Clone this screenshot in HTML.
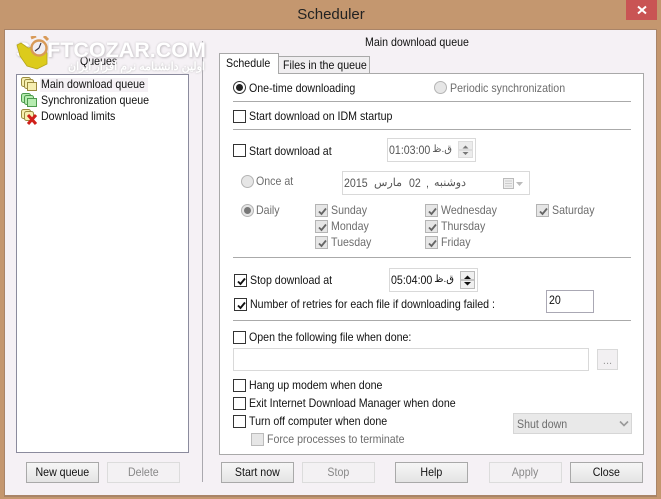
<!DOCTYPE html>
<html><head><meta charset="utf-8">
<style>
html,body{margin:0;padding:0}
body{width:661px;height:499px;overflow:hidden;position:relative;background:#c4976f;font-family:"Liberation Sans","Noto Sans CJK SC",sans-serif;font-size:12px;color:#111}
.a,.t,.cb,.rd,.btn,.sep,.n{position:absolute;box-sizing:border-box}
.t{white-space:nowrap;line-height:14px;height:14px;transform:scaleX(.885);transform-origin:0 0}
.n{white-space:nowrap;line-height:14px;height:14px}
.d{color:#6d6d6d}
.cb{width:13px;height:13px;border:1px solid #333;background:#fff}
.cb.g{border-color:#b4b4b4;background:#e6e6e6}
.cb svg{position:absolute;left:1px;top:1px}
.rd{width:13px;height:13px;border-radius:50%;border:1px solid #333;background:#fff}
.rd.g{border-color:#b4b4b4;background:#e6e6e6}
.rd i{position:absolute;left:2px;top:2px;width:7px;height:7px;border-radius:50%;background:#222}
.rd.g i{background:#777}
.btn{height:21px;width:73px;top:462px;border:1px solid #a9a9a9;background:linear-gradient(#f6f6f6,#e4e4e4);text-align:center;line-height:19px}
.btn span{display:inline-block;transform:scaleX(.885)}
.btn.dis{border-color:#dcdcdc;background:#f3f1f3;color:#888}
.sep{left:233px;width:398px;height:1px;background:#aaa}
.f{position:absolute;box-sizing:border-box;background:#fff;border:1px solid #d9d9d9}
</style></head><body>
<!-- title bar -->
<div class="n" style="left:231px;width:200px;top:6px;height:18px;line-height:18px;text-align:center;font-size:15px;color:#222">Scheduler</div>
<div class="a" style="left:626px;top:0;width:31px;height:20px;background:#c95454"></div>
<svg class="a" style="left:636px;top:5px" width="12" height="10"><path d="M2 1.5L10 8.5M10 1.5L2 8.5" stroke="#fff" stroke-width="2"/></svg>
<!-- client -->
<div class="a" style="left:4px;top:29px;width:653px;height:468px;background:#a98468"></div>
<div class="a" style="left:5px;top:30px;width:651px;height:465px;background:#f5f1f5"></div>
<!-- left -->
<div class="a" style="left:202px;top:41px;width:1px;height:441px;background:#aaa8ae"></div>
<div class="t" style="left:80px;top:54px;color:#111">Queues</div>
<div class="a" style="left:16px;top:74px;width:173px;height:379px;background:#fff;border:1px solid #8b8b9d;box-sizing:border-box"></div>
<div class="a" style="left:40px;top:78px;width:108px;height:14px;background:#f5f1f5"></div>
<div class="t" style="left:41px;top:77px">Main download queue</div>
<div class="t" style="left:41px;top:93px">Synchronization queue</div>
<div class="t" style="left:41px;top:109px">Download limits</div>
<svg class="a" style="left:20px;top:76px" width="18" height="50">
<g stroke="#9a8a3e" fill="#f6efb0"><rect x="1.5" y="1.5" width="9" height="9" rx="2"/><rect x="4.5" y="3.5" width="9" height="9" rx="2"/><rect x="7.5" y="6.5" width="9" height="8"/></g>
<g stroke="#4c9a4c" fill="#b6ecb0"><rect x="1.5" y="17.5" width="9" height="9" rx="2"/><rect x="4.5" y="19.5" width="9" height="9" rx="2"/><rect x="7.5" y="22.5" width="9" height="8"/></g>
<g stroke="#9a8a3e" fill="#f6efb0"><rect x="1.5" y="33.5" width="9" height="9" rx="2"/><rect x="4.5" y="35.5" width="9" height="9" rx="2"/></g>
<path d="M8 39L16 48M16 39L8 48" stroke="#d0201a" stroke-width="3"/>
</svg>
<!-- watermark -->
<div class="n" style="left:16px;top:38px;height:24px;line-height:24px;font-size:21.5px;font-weight:bold;color:#fff;text-shadow:0 0 2px #c9c5c9,1px 1px 2px #c9c5c9">SOFTCOZAR.COM</div>
<div class="n" dir="rtl" style="left:45px;width:160px;top:60px;height:14px;font-size:11px;font-weight:bold;color:#fff;text-shadow:0 0 2px #bbb">اولین دانشنامه نرم افزار ایران</div>
<!-- logo -->
<svg class="a" style="left:16px;top:36px" width="34" height="34">
<path d="M1 9L5 7L12 12L24 10L31 17L31 28L21 33L11 30L4 20Z" fill="#dccb1c" stroke="#b5a51c" stroke-width=".8"/>
<path d="M15 2L20 0M28 0L32 4" stroke="#d89a58" stroke-width="3"/>
<circle cx="23" cy="12" r="7.5" fill="#f1eef2" stroke="#d89a58" stroke-width="2.4"/>
<path d="M23 12L25 7M23 12L19 15" stroke="#334" stroke-width="1.1"/>
</svg>
<div class="btn" style="left:26px"><span>New queue</span></div>
<div class="btn dis" style="left:107px"><span>Delete</span></div>
<!-- right header -->
<div class="t" style="left:365px;top:35px">Main download queue</div>
<!-- panel -->
<div class="a" style="left:219px;top:73px;width:425px;height:382px;background:#fff;border:1px solid #a9a9a9;box-sizing:border-box"></div>
<div class="a" style="left:278px;top:56px;width:92px;height:18px;background:#f0eef0;border:1px solid #a9a9a9;box-sizing:border-box"></div>
<div class="t" style="left:283px;top:58px">Files in the queue</div>
<div class="a" style="left:219px;top:53px;width:60px;height:21px;background:#fff;border:1px solid #a9a9a9;border-bottom:none;box-sizing:border-box"></div>
<div class="t" style="left:226px;top:56px">Schedule</div>
<!-- row 1 -->
<div class="rd" style="left:233px;top:81px"><i></i></div>
<div class="t" style="left:249px;top:81px">One-time downloading</div>
<div class="rd g" style="left:434px;top:81px"></div>
<div class="t d" style="left:450px;top:81px">Periodic synchronization</div>
<div class="sep" style="top:101px"></div>
<div class="cb" style="left:233px;top:110px"></div>
<div class="t" style="left:249px;top:109px">Start download on IDM startup</div>
<div class="sep" style="top:129px"></div>
<!-- start at -->
<div class="cb" style="left:233px;top:144px"></div>
<div class="t" style="left:249px;top:144px">Start download at</div>
<div class="f" style="left:387px;top:138px;width:89px;height:24px"></div>
<div class="t" style="left:389px;top:143px;color:#555">01:03:00</div>
<div class="n" dir="rtl" style="left:432px;width:20px;top:143px;color:#555;font-size:10px;text-align:right">ق.ظ</div>
<div class="a" style="left:458px;top:141px;width:15px;height:17px;background:#ececec;border:1px solid #ddd;box-sizing:border-box"></div>
<svg class="a" style="left:458px;top:141px" width="15" height="18"><path d="M7.5 4.5L10.5 7.5H4.5Z" fill="#777"/><path d="M4.5 11H10.5L7.5 14Z" fill="#777"/><path d="M1 9H14" stroke="#ccc"/></svg>
<!-- once -->
<div class="rd g" style="left:241px;top:175px"></div>
<div class="t d" style="left:256px;top:174px">Once at</div>
<div class="f" style="left:342px;top:171px;width:188px;height:24px"></div>
<div class="t" style="left:344px;top:176px;color:#555">2015</div>
<div class="n" dir="rtl" style="left:372px;width:30px;top:176px;color:#555;font-size:11px;text-align:right">مارس</div>
<div class="t" style="left:409px;top:176px;color:#555">02</div>
<div class="t" style="left:426px;top:176px;color:#555">,</div>
<div class="n" dir="rtl" style="left:425px;width:41px;top:176px;color:#555;font-size:11px;text-align:right">دوشنبه</div>
<svg class="a" style="left:503px;top:177px" width="22" height="13"><rect x=".5" y="1.5" width="10" height="10" fill="#eee" stroke="#bbb"/><path d="M2 4H9M2 6.5H9M2 9H9" stroke="#ccc"/><path d="M13 5H20L16.5 9Z" fill="#bbb"/></svg>
<div class="rd g" style="left:241px;top:204px"><i style="background:#777"></i></div>
<div class="t d" style="left:256px;top:203px">Daily</div>
<!-- days -->
<div class="cb g" style="left:315px;top:204px"><svg width="11" height="11"><path d="M2 5.5L4.5 8L9 2.5" fill="none" stroke="#666" stroke-width="1.8"/></svg></div><div class="t d" style="left:331px;top:203px">Sunday</div>
<div class="cb g" style="left:315px;top:220px"><svg width="11" height="11"><path d="M2 5.5L4.5 8L9 2.5" fill="none" stroke="#666" stroke-width="1.8"/></svg></div><div class="t d" style="left:331px;top:219px">Monday</div>
<div class="cb g" style="left:315px;top:236px"><svg width="11" height="11"><path d="M2 5.5L4.5 8L9 2.5" fill="none" stroke="#666" stroke-width="1.8"/></svg></div><div class="t d" style="left:331px;top:235px">Tuesday</div>
<div class="cb g" style="left:425px;top:204px"><svg width="11" height="11"><path d="M2 5.5L4.5 8L9 2.5" fill="none" stroke="#666" stroke-width="1.8"/></svg></div><div class="t d" style="left:441px;top:203px">Wednesday</div>
<div class="cb g" style="left:425px;top:220px"><svg width="11" height="11"><path d="M2 5.5L4.5 8L9 2.5" fill="none" stroke="#666" stroke-width="1.8"/></svg></div><div class="t d" style="left:441px;top:219px">Thursday</div>
<div class="cb g" style="left:425px;top:236px"><svg width="11" height="11"><path d="M2 5.5L4.5 8L9 2.5" fill="none" stroke="#666" stroke-width="1.8"/></svg></div><div class="t d" style="left:441px;top:235px">Friday</div>
<div class="cb g" style="left:536px;top:204px"><svg width="11" height="11"><path d="M2 5.5L4.5 8L9 2.5" fill="none" stroke="#666" stroke-width="1.8"/></svg></div><div class="t d" style="left:552px;top:203px">Saturday</div>
<div class="sep" style="top:257px"></div>
<!-- stop -->
<div class="cb" style="left:234px;top:274px"><svg width="11" height="11"><path d="M2 5.5L4.5 8L9 2.5" fill="none" stroke="#111" stroke-width="1.9"/></svg></div>
<div class="t" style="left:250px;top:273px">Stop download at</div>
<div class="f" style="left:389px;top:268px;width:89px;height:24px"></div>
<div class="t" style="left:391px;top:273px">05:04:00</div>
<div class="n" dir="rtl" style="left:434px;width:20px;top:273px;font-size:10px;text-align:right">ق.ظ</div>
<svg class="a" style="left:460px;top:271px" width="15" height="18"><rect x=".5" y=".5" width="14" height="17" fill="#f0f0f0" stroke="#bbb"/><path d="M7.5 4.5L11 8H4Z" fill="#111"/><path d="M4 11H11L7.5 14.5Z" fill="#111"/><path d="M1 9H14" stroke="#999"/></svg>
<div class="cb" style="left:234px;top:298px"><svg width="11" height="11"><path d="M2 5.5L4.5 8L9 2.5" fill="none" stroke="#111" stroke-width="1.9"/></svg></div>
<div class="t" style="left:250px;top:297px">Number of retries for each file if downloading failed :</div>
<div class="f" style="left:546px;top:290px;width:48px;height:23px;border-color:#aaa8b4"></div>
<div class="t" style="left:549px;top:293px">20</div>
<div class="sep" style="top:320px"></div>
<!-- bottom options -->
<div class="cb" style="left:233px;top:331px"></div>
<div class="t" style="left:249px;top:330px">Open the following file when done:</div>
<div class="f" style="left:233px;top:348px;width:356px;height:23px"></div>
<div class="f" style="left:597px;top:349px;width:21px;height:21px;background:#f2f0f2;text-align:center;line-height:22px;color:#999;font-size:11px">...</div>
<div class="cb" style="left:233px;top:379px"></div>
<div class="t" style="left:249px;top:378px">Hang up modem when done</div>
<div class="cb" style="left:233px;top:397px"></div>
<div class="t" style="left:249px;top:396px">Exit Internet Download Manager when done</div>
<div class="cb" style="left:233px;top:415px"></div>
<div class="t" style="left:249px;top:414px">Turn off computer when done</div>
<div class="cb g" style="left:251px;top:433px;border-color:#bbb"></div>
<div class="t d" style="left:267px;top:432px">Force processes to terminate</div>
<div class="a" style="left:513px;top:413px;width:119px;height:21px;background:#e9e9e9;border:1px solid #d6d6d6;box-sizing:border-box"></div>
<div class="t d" style="left:517px;top:417px">Shut down</div>
<svg class="a" style="left:619px;top:420px" width="10" height="8"><path d="M1 1.5L5 5.5L9 1.5" fill="none" stroke="#999" stroke-width="1.6"/></svg>
<!-- buttons -->
<div class="btn" style="left:221px"><span>Start now</span></div>
<div class="btn dis" style="left:302px"><span>Stop</span></div>
<div class="btn" style="left:395px"><span>Help</span></div>
<div class="btn dis" style="left:489px"><span>Apply</span></div>
<div class="btn" style="left:570px"><span>Close</span></div>
</body></html>
